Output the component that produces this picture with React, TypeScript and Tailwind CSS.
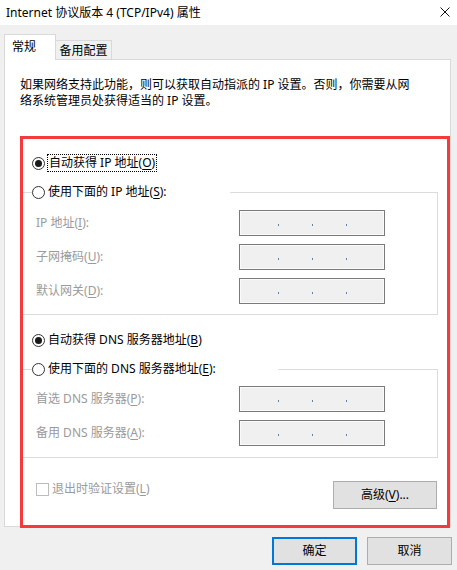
import React from "react";

function Radio({ checked }: { checked?: boolean }) {
  return (
    <span className="w-[13px] h-[13px] rounded-full border border-[#333] bg-white flex items-center justify-center shrink-0">
      {checked && <span className="w-[7px] h-[7px] rounded-full bg-[#1a1a1a]" />}
    </span>
  );
}

function Key({ k }: { k: string }) {
  return <span className="underline underline-offset-2">{k}</span>;
}

function IpBox() {
  return (
    <div className="w-[146px] h-[26px] border border-[#7a7a7a] bg-[#f0f0f0] shadow-[inset_0_0_0_1px_#fbfbfb] flex items-center pl-[38px] gap-[33px] pt-[4px]">
      <span className="w-px h-[2px] bg-[#6b7f9c]" />
      <span className="w-px h-[2px] bg-[#6b7f9c]" />
      <span className="w-px h-[2px] bg-[#6b7f9c]" />
    </div>
  );
}

function Field({ label, k }: { label: string; k: string }) {
  return (
    <div className="flex items-center h-[26px] pl-[14px]">
      <span className="w-[203px] text-[#9a9a9a] whitespace-nowrap">
        {label}(<Key k={k} />):
      </span>
      <IpBox />
    </div>
  );
}

export default function App() {
  return (
    <div className="relative w-[457px] h-[570px] bg-[#f0f0f0] text-[12px] leading-[16px] text-black font-['Noto_Sans','Noto_Sans_CJK_SC',sans-serif] overflow-hidden">
      {/* title bar */}
      <div className="h-[25px] bg-white flex items-center justify-between pl-[6px] pr-[7px]">
        <span className="whitespace-nowrap">Internet 协议版本 4 (TCP/IPv4) 属性</span>
        <svg width="10" height="10" viewBox="0 0 10 10" className="mt-[-2px]">
          <path d="M0.5 0.5L9.5 9.5M9.5 0.5L0.5 9.5" stroke="#111" strokeWidth="1" />
        </svg>
      </div>

      {/* tabs */}
      <div className="h-[35px] pl-[4px] flex items-end">
        <div className="relative z-10 w-[52px] h-[26px] bg-white border-l border-t border-r border-[#d9d9d9] flex items-center pl-[7px] pb-[1px]">
          常规
        </div>
        <div className="w-[56px] h-[20px] border-t border-r border-[#d9d9d9] flex items-center justify-center">
          备用配置
        </div>
      </div>

      {/* panel */}
      <div className="ml-[4px] -mt-px w-[447px] h-[468px] border border-[#d9d9d9] bg-white px-[15px] pt-[17px]">
        <p className="whitespace-nowrap">
          如果网络支持此功能，则可以获取自动指派的 IP 设置。否则，你需要从网
          <br />
          络系统管理员处获得适当的 IP 设置。
        </p>

        <div className="mt-[45px] ml-[12px] h-[18px] flex items-center gap-[2px]">
          <Radio checked />
          <span className="border border-dotted border-black px-[1px] h-[18px] flex items-center whitespace-nowrap">
            自动获得 IP 地址(<Key k="O" />)
          </span>
        </div>

        <fieldset className="mt-[11px] ml-[1px] w-[417px] border border-[#dcdcdc] pb-[10px]">
          <legend className="ml-[10px] w-[198px] h-[18px] flex items-center gap-[3px] bg-white">
            <Radio />
            <span className="whitespace-nowrap">
              使用下面的 IP 地址(<Key k="S" />):
            </span>
          </legend>
          <div className="mt-[9px] flex flex-col gap-[8px]">
            <Field label="IP 地址" k="I" />
            <Field label="子网掩码" k="U" />
            <Field label="默认网关" k="D" />
          </div>
        </fieldset>

        <div className="mt-[16px] ml-[12px] h-[18px] flex items-center gap-[3px]">
          <Radio checked />
          <span className="whitespace-nowrap">
            自动获得 DNS 服务器地址(<Key k="B" />)
          </span>
        </div>

        <fieldset className="mt-[11px] ml-[1px] w-[417px] border border-[#dcdcdc] pb-[11px]">
          <legend className="ml-[10px] w-[246px] h-[18px] flex items-center gap-[3px] bg-white">
            <Radio />
            <span className="whitespace-nowrap">
              使用下面的 DNS 服务器地址(<Key k="E" />):
            </span>
          </legend>
          <div className="mt-[8px] flex flex-col gap-[8px]">
            <Field label="首选 DNS 服务器" k="P" />
            <Field label="备用 DNS 服务器" k="A" />
          </div>
        </fieldset>

        <div className="mt-[22px] ml-[1px] w-[417px] flex items-start justify-between">
          <div className="h-[18px] pl-[15px] flex items-center gap-[3px] text-[#9a9a9a]">
            <span className="w-[13px] h-[13px] border border-[#bcbcbc] bg-white" />
            <span className="whitespace-nowrap">
              退出时验证设置(<Key k="L" />)
            </span>
          </div>
          <button className="mt-[1px] mr-[1px] w-[104px] h-[28px] bg-[#e1e1e1] border border-[#adadad] flex items-center justify-center">
            高级(<Key k="V" />)...
          </button>
        </div>
      </div>

      {/* dialog buttons */}
      <div className="mt-[10px] pr-[5px] flex justify-end gap-[10px]">
        <button className="w-[85px] h-[28px] bg-[#e1e1e1] border-2 border-[#0078d7] flex items-center justify-center">
          确定
        </button>
        <button className="w-[85px] h-[28px] bg-[#e1e1e1] border border-[#adadad] flex items-center justify-center">
          取消
        </button>
      </div>

      {/* red annotation box */}
      <div className="absolute left-[20px] top-[136px] w-[430px] h-[392px] border-[3px] border-[#f43a3a] pointer-events-none" />
    </div>
  );
}
